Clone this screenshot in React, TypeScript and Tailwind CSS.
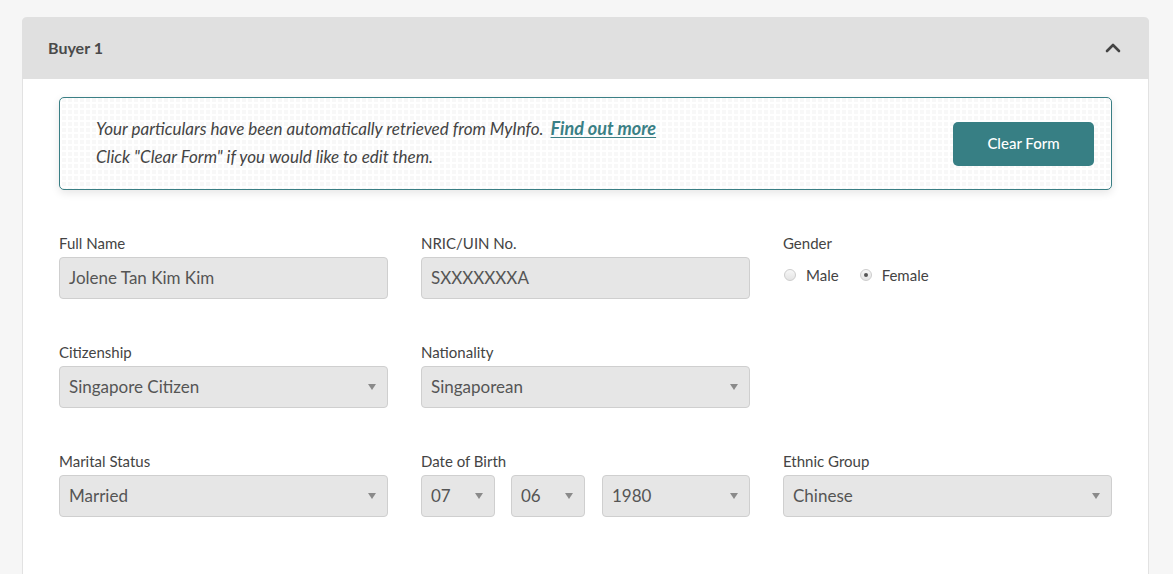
import { ChevronUp } from "lucide-react";

function Caret() {
  return (
    <svg width="8" height="6" viewBox="0 0 8 6" className="shrink-0">
      <path d="M0 0 L8 0 L4 6 Z" fill="#8a8a8a" />
    </svg>
  );
}

function Label({ children }: { children: React.ReactNode }) {
  return <div className="h-5 text-[15px] leading-5 text-[#444] mb-1">{children}</div>;
}

function TextBox({ value }: { value: string }) {
  return (
    <div className="h-[42px] rounded-[4px] border border-[#cfcfcf] bg-[#e6e6e6] px-[9px] flex items-center text-[17px] text-[#555]">
      {value}
    </div>
  );
}

function SelectBox({ value, className = "" }: { value: string; className?: string }) {
  return (
    <div
      className={`h-[42px] rounded-[4px] border border-[#cfcfcf] bg-[#e6e6e6] pl-[9px] pr-[11px] flex items-center justify-between text-[17px] text-[#555] ${className}`}
    >
      <span>{value}</span>
      <Caret />
    </div>
  );
}

function Radio({ checked, label }: { checked?: boolean; label: string }) {
  return (
    <div className="flex items-center gap-[10px]">
      <span className="h-[12px] w-[12px] rounded-full border border-[#cdcdcd] bg-gradient-to-b from-[#f7f7f7] to-[#e4e4e4] grid place-items-center">
        {checked && <span className="h-[4px] w-[4px] rounded-full bg-[#555]" />}
      </span>
      <span className="text-[15px] text-[#444]">{label}</span>
    </div>
  );
}

export default function App() {
  return (
    <div
      className="min-h-[574px] bg-[#f6f6f6] pt-[17px] pl-[22px] pr-[24px]"
      style={{ fontFamily: "Lato, 'Open Sans', sans-serif" }}
    >
      <div className="rounded-t-[5px] border-x border-[#e2e2e2] bg-white min-h-[560px]">
        {/* header */}
        <div className="h-[62px] rounded-t-[5px] bg-[#e0e0e0] flex items-center justify-between pl-[26px] pr-[24px] -mx-px">
          <span className="text-[16px] font-bold text-[#4a4a4a]">Buyer 1</span>
          <ChevronUp className="h-6 w-6 text-[#444]" strokeWidth={2.6} />
        </div>

        <div className="px-[36px] pt-[18px]">
          {/* MyInfo notice */}
          <div className="h-[93px] rounded-[5px] border border-[#3a7f85] shadow-[0_3px_8px_rgba(0,0,0,0.1)] bg-[#f8f8f8] bg-[linear-gradient(90deg,#ffffff_2px,transparent_2px),linear-gradient(0deg,#ffffff_2px,transparent_2px)] bg-[length:6px_6px] flex items-center justify-between pl-[36px] pr-[17px]">
            <div className="text-[17px] leading-[28px] italic text-[#444] -mt-[2px]">
              <div>
                Your particulars have been automatically retrieved from MyInfo.{" "}
                <a className="ml-[3px] text-[18px] font-bold text-[#3a7f85] underline underline-offset-2">Find out more</a>
              </div>
              <div>Click "Clear Form" if you would like to edit them.</div>
            </div>
            <button className="h-[44px] w-[141px] rounded-[5px] bg-[#377f84] text-white text-[15px] font-medium">
              Clear Form
            </button>
          </div>

          {/* fields */}
          <div className="mt-[43px] grid grid-cols-3 gap-x-[33px] gap-y-[43px]">
            <div>
              <Label>Full Name</Label>
              <TextBox value="Jolene Tan Kim Kim" />
            </div>
            <div>
              <Label>NRIC/UIN No.</Label>
              <TextBox value="SXXXXXXXA" />
            </div>
            <div>
              <Label>Gender</Label>
              <div className="flex items-center gap-[21px] pl-[1px] mt-[11px]">
                <Radio label="Male" />
                <Radio checked label="Female" />
              </div>
            </div>

            <div>
              <Label>Citizenship</Label>
              <SelectBox value="Singapore Citizen" />
            </div>
            <div>
              <Label>Nationality</Label>
              <SelectBox value="Singaporean" />
            </div>
            <div />

            <div>
              <Label>Marital Status</Label>
              <SelectBox value="Married" />
            </div>
            <div>
              <Label>Date of Birth</Label>
              <div className="flex">
                <SelectBox value="07" className="w-[74px]" />
                <SelectBox value="06" className="w-[74px] ml-[16px]" />
                <SelectBox value="1980" className="flex-1 ml-[17px]" />
              </div>
            </div>
            <div>
              <Label>Ethnic Group</Label>
              <SelectBox value="Chinese" />
            </div>
          </div>
        </div>
      </div>
    </div>
  );
}
